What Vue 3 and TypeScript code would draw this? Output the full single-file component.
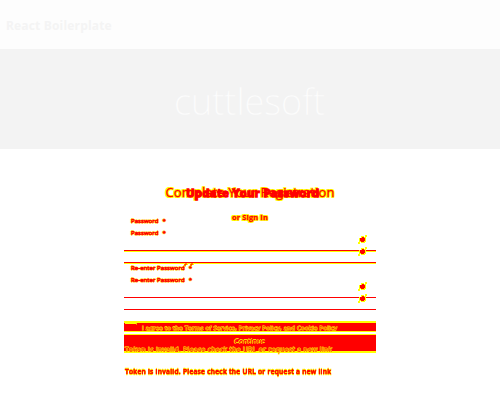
<script setup lang="ts">
interface Field { label: string; edge: boolean }
const fields: Field[] = [
  { label: 'Password', edge: true },
  { label: 'Re-enter Password', edge: false },
]
</script>

<template>
  <div class="page">
    <header class="bar">React Boilerplate</header>
    <section class="hero">
      <svg width="152" height="36" viewBox="0 0 152 36" aria-label="cuttlesoft">
        <text x="0" y="30" textLength="151" lengthAdjust="spacingAndGlyphs">cuttlesoft</text>
      </svg>
    </section>
    <main class="form">
      <div class="heading">
        <h1 class="mark">Complete Your Registration</h1>
        <h2>Update Your Password</h2>
      </div>
      <div class="signin mark">or Sign In</div>
      <div v-for="f in fields" :key="f.label" class="field" :class="{ edge: f.edge }">
        <div class="label mark">{{ f.label }}<i>*</i></div>
        <div class="label mark">{{ f.label }}<i>*</i></div>
        <div class="line first"></div>
        <div class="line second"></div>
        <svg v-if="!f.edge" class="ticks" width="12" height="6" viewBox="0 0 12 6">
          <path d="M0 4V1H4V3H2V5M6 4V1H10V3H8V5" fill="#ff0" />
          <path d="M1 4V2H3M7 4V2H9" fill="none" stroke="red" />
        </svg>
        <svg class="eyes" width="10" height="24" viewBox="0 0 10 24" shape-rendering="crispEdges">
          <g v-for="y in [0, 12]" :key="y" :transform="`translate(0 ${y})`">
            <path d="M3 1H6V2H7V0H9V2H8V7H7V8H3V7H2V9H0V7H1V3H3Z" fill="#ff0" />
            <path d="M4 2H6V3H7V6H6V7H3V6H2V3H4Z" fill="red" />
          </g>
        </svg>
      </div>
      <div class="agree">
        <svg width="252" height="8">
          <path d="M1 .5H12.5V1.5" fill="none" stroke="#ff0" />
          <text x="18" y="7" textLength="195">I agree to the Terms of Service, Privacy Policy, and Cookie Policy</text>
        </svg>
      </div>
      <div class="submit">
        <b>Continue</b>
        <svg width="240" height="11"><text x="1" y="7" textLength="207">Token is invalid. Please check the URL or request a new link</text></svg>
      </div>
      <svg class="error" width="252" height="14"><text x="1" y="9" textLength="206">Token is invalid. Please check the URL or request a new link</text></svg>
    </main>
  </div>
</template>

<style>
body { background: #fff; }
</style>
<style scoped>
.page { height: 415px; overflow: hidden; font-family: "Open Sans", sans-serif; }
.bar { height: 49px; box-sizing: border-box; padding: 17px 6px 0; background: #fdfdfd; color: #f4f4f4; font-size: 12px; letter-spacing: .17px; line-height: 17px; font-weight: 700; }
.hero { height: 100px; box-sizing: border-box; padding-top: 8px; background: #f3f3f3; display: flex; justify-content: center; align-items: center; }
.hero svg { overflow: visible; }
.hero text { font: 300 37px "Open Sans", sans-serif; fill: #fdfdfd; stroke: #f3f3f3; stroke-width: .3px; }
.form { width: 252px; margin: 0 auto; display: flex; flex-direction: column; padding-top: 35px; }
.mark { color: red; text-shadow: -1px -1px #ff0, 0 -1px #ff0, 1px -1px #ff0, -1px 0 #ff0, 1px 0 #ff0, -1px 1px #ff0, 0 1px #ff0, 1px 1px #ff0; white-space: nowrap; -webkit-text-stroke: .3px red; }
.heading { height: 28px; display: grid; justify-items: center; }
h1, h2 { grid-area: 1 / 1; margin: 0; font-weight: 400; line-height: 17px; }
h1 { font-size: 13px; letter-spacing: .1px; }
h2 { font-size: 11px; letter-spacing: .45px; padding-left: 6px; font-weight: 700; color: red; -webkit-text-stroke: 1.3px red; white-space: nowrap; line-height: 18px; }
.signin { height: 4px; text-align: center; font-size: 7.5px; letter-spacing: .1px; font-weight: 700; line-height: 10px; }
.field { position: relative; height: 47px; }
.label { padding-left: 7px; height: 12px; line-height: 10px; font-size: 6px; letter-spacing: .06px; text-shadow: -1px 0 #ff0, 1px 0 #ff0, 0 -1px #ff0, 0 1px #ff0; -webkit-text-stroke: .6px red; }
.label i { margin-left: 4px; font-style: normal; }
.line { position: absolute; left: 0; width: 252px; height: 1px; background: red; }
.first { top: 34px; }
.second { top: 46px; }
.edge .line { box-shadow: 0 1px #ff0; }
.eyes { position: absolute; left: 234px; top: 19px; }
.ticks { position: absolute; left: 60px; top: -1px; }
.agree { margin-top: 11px; height: 11px; box-sizing: border-box; background: red; border-top: 2px solid #ff0; border-bottom: 1px solid #ff0; }
.agree svg, .submit svg { display: block; overflow: visible; }
.agree text, .submit text { font-size: 6px; fill: red; stroke: #ff0; stroke-width: .9px; paint-order: stroke; }
.submit text { font-size: 6.6px; }
.submit { margin-top: 2px; height: 19px; box-sizing: border-box; background: red; border-top: 1px solid #ff0; border-bottom: 2px solid #ff0; }
.submit b { display: block; text-align: center; height: 9px; line-height: 14px; font-size: 7px; font-weight: 600; color: red; text-shadow: 0 -1px #ff0, -1px 0 #ff0; }
.submit svg { margin-top: 1px; }
.error { margin-top: 12px; overflow: visible; }
.error text { font-size: 6.6px; font-weight: 600; fill: red; stroke: red; stroke-width: .5px; filter: drop-shadow(0 1px #ff0) drop-shadow(0 -1px #ff0); }
</style>
